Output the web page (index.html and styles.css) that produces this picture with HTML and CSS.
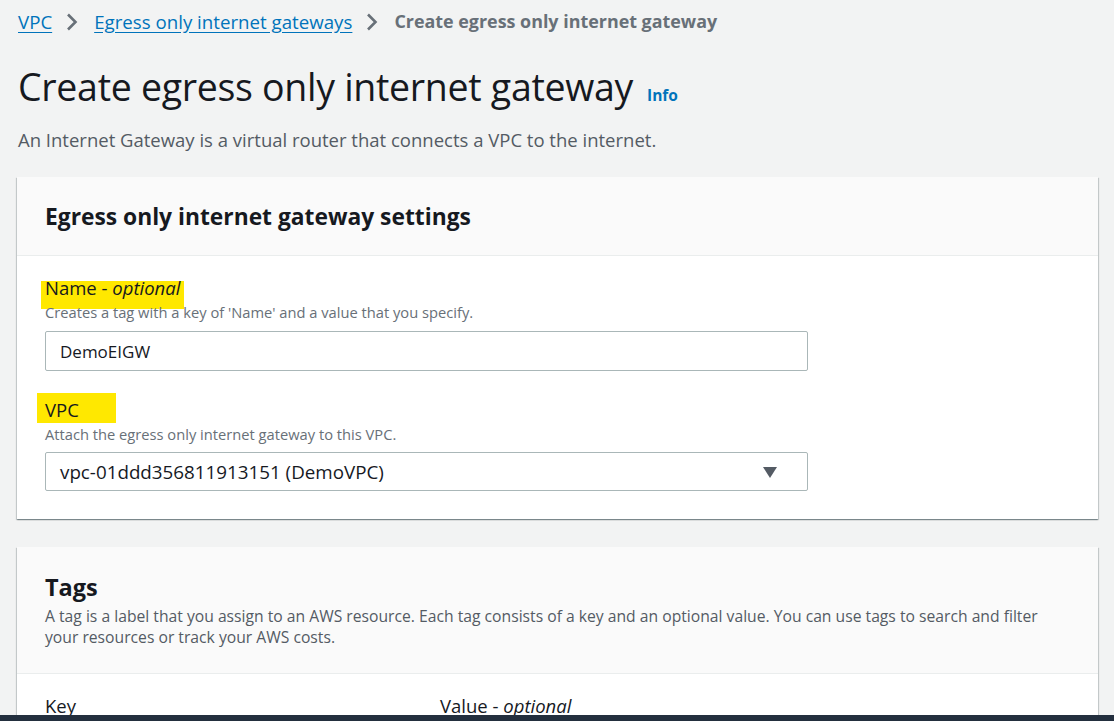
FILE: index.html
```html
<!DOCTYPE html>
<html lang="en">
<head>
<meta charset="utf-8">
<title>Create egress only internet gateway</title>
<link rel="stylesheet" href="styles.css">
</head>
<body>
<div class="page">
  <nav class="breadcrumbs">
    <a href="#" class="crumb-link">VPC</a>
    <svg class="chev" width="12" height="18" viewBox="0 0 12 18"><path d="M2 1.5 L9.5 9 L2 16.5" fill="none" stroke="#687078" stroke-width="2.6"/></svg>
    <a href="#" class="crumb-link">Egress only internet gateways</a>
    <svg class="chev" width="12" height="18" viewBox="0 0 12 18"><path d="M2 1.5 L9.5 9 L2 16.5" fill="none" stroke="#687078" stroke-width="2.6"/></svg>
    <span class="crumb-current">Create egress only internet gateway</span>
  </nav>

  <header class="page-header">
    <h1 class="title">Create egress only internet gateway</h1>
    <a href="#" class="info">Info</a>
  </header>
  <p class="page-desc">An Internet Gateway is a virtual router that connects a VPC to the internet.</p>

  <section class="card">
    <div class="card-head">
      <h2 class="card-title">Egress only internet gateway settings</h2>
    </div>
    <div class="card-body">
      <div class="field">
        <label class="label"><span class="hl hl-name">Name - <em>optional</em></span></label>
        <div class="hint">Creates a tag with a key of 'Name' and a value that you specify.</div>
        <div class="input">DemoEIGW</div>
      </div>
      <div class="field field-vpc">
        <label class="label"><span class="hl hl-vpc">VPC</span></label>
        <div class="hint">Attach the egress only internet gateway to this VPC.</div>
        <div class="input select">
          <span>vpc-01ddd356811913151 (DemoVPC)</span>
          <svg class="caret" width="14" height="11" viewBox="0 0 14 11"><path d="M0 0 H14 L7 11 Z" fill="#545b64"/></svg>
        </div>
      </div>
    </div>
  </section>

  <section class="card card-tags">
    <div class="card-head tags-head">
      <h2 class="card-title tags-title">Tags</h2>
      <p class="tags-desc">A tag is a label that you assign to an AWS resource. Each tag consists of a key and an optional value. You can use tags to search and filter your resources or track your AWS costs.</p>
    </div>
    <div class="card-body tags-body">
      <div class="tag-cols">
        <span class="col-key">Key</span>
        <span class="col-value">Value - <em>optional</em></span>
      </div>
    </div>
  </section>
</div>
<div class="footer-bar"></div>
</body>
</html>
```

FILE: styles.css
```css
* { box-sizing: border-box; }
html, body { height: 100%; }
body {
  margin: 0;
  background: #f2f3f3;
  font-family: "Open Sans", "Noto Sans", sans-serif;
  color: #16191f;
  overflow: hidden;
}
.page {
  padding: 0 16px 0 17px;
}
.breadcrumbs {
  display: flex;
  align-items: center;
  height: 42px;
  padding-left: 1px;
  font-size: 18.7px;
}
.crumb-link {
  color: #0073bb;
  text-decoration: underline;
  text-underline-offset: 3px;
}
.chev { margin: 2px 16px 0 14px; flex: none; }
.crumb-current {
  color: #687078;
  font-weight: 700;
  font-size: 17.9px;
}
.page-header {
  display: flex;
  align-items: baseline;
  margin-top: 21px;
  padding-left: 1px;
}
.title {
  margin: 0;
  font-size: 37.5px;
  font-weight: 400;
  line-height: 48px;
  letter-spacing: -0.3px;
}
.info {
  margin-left: 14px;
  color: #0073bb;
  font-size: 15.5px;
  font-weight: 700;
  text-decoration: none;
}
.page-desc {
  margin: 17px 0 0 1px;
  font-size: 18.5px;
  line-height: 24px;
  color: #545b64;
}
.card {
  margin-top: 25px;
  background: #fff;
  box-shadow: 0 1px 1px 0 rgba(0,28,36,0.3), 1px 1px 1px 0 rgba(0,28,36,0.15), -1px 1px 1px 0 rgba(0,28,36,0.15);
}
.card-head {
  background: #fafafa;
  border-bottom: 1px solid #eaeded;
  height: 79px;
  padding: 0 28px;
  display: flex;
  align-items: center;
}
.card-title {
  margin: 0;
  font-size: 22.8px;
  font-weight: 700;
}
.card-body {
  padding: 21px 28px 28px 28px;
}
.field-vpc { margin-top: 28px; }
.label {
  display: block;
  position: relative;
  z-index: 0;
  font-size: 18.5px;
  line-height: 22px;
}
.hl {
  position: relative;
}
.hl::before {
  content: "";
  position: absolute;
  z-index: -1;
  background: #ffe800;
}
.hl-name::before { left: -4px; right: -4px; top: 6px; bottom: -9px; }
.hl-vpc::before { left: -8px; right: -37px; top: -4px; bottom: -1px; }
.hint {
  position: relative;
  font-size: 14.7px;
  line-height: 18px;
  color: #687078;
  margin-top: 4px;
}
.input {
  width: 763px;
  height: 40px;
  margin-top: 10px;
  border: 1px solid #aab7b8;
  border-radius: 2px;
  display: flex;
  align-items: center;
  padding: 0 14px;
  font-size: 17px;
}
.field-vpc .hint { margin-top: 4px; }
.field-vpc .input { margin-top: 9px; height: 39px; }
.select { justify-content: space-between; padding-right: 30px; font-size: 18.8px; }
.caret { margin-top: 2px; flex: none; }
.card-tags { margin-top: 28px; }
.tags-head {
  height: auto;
  display: block;
  padding: 25px 28px 25px 28px;
}
.tags-title { font-size: 23.5px; line-height: 30px; }
.tags-desc {
  max-width: 1010px;
  margin: 4px 0 0 0;
  font-size: 15.7px;
  line-height: 21px;
  color: #545b64;
}
.tags-body { padding-top: 20px; }
.tag-cols {
  display: flex;
  font-size: 18.5px;
  line-height: 24px;
}
.col-key { width: 395px; }
.footer-bar {
  position: fixed;
  left: 0; right: 0; bottom: 0;
  height: 6px;
  background: #232f3e;
}
```
